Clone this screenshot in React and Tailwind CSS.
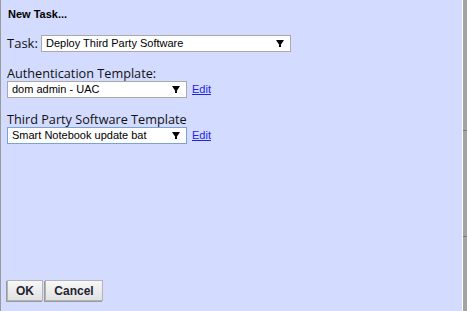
import React from 'react';

const Arrow = () => (
  <svg width="8" height="7" viewBox="0 0 8 7" className="shrink-0">
    <polygon points="0,0 8,0 4,6" fill="#000" />
    <rect x="3" y="5" width="2" height="2" fill="#000" />
  </svg>
);

const FakeSelect = ({ value, width, focused }) => (
  <div
    className={`flex h-[17px] items-center justify-between border bg-white pl-[4px] pr-[6px] font-['Liberation_Sans',Arial,sans-serif] text-[11px] text-black ${width} ${
      focused ? 'border-[#7ba1d6]' : 'border-[#a9a9a9]'
    }`}
  >
    <span className="leading-none">{value}</span>
    <Arrow />
  </div>
);

const EditLink = () => (
  <a href="#" className="ml-[5px] font-['Liberation_Sans',Arial,sans-serif] text-[11px] leading-none text-[#2222ee] underline">
    Edit
  </a>
);

const App = () => {
  return (
    <div className="flex h-[311px] w-[467px] overflow-hidden bg-[#d3dcfe]">
      <div className="w-px bg-[#9a9a9a]" />
      <div className="flex flex-1 flex-col pl-[6px] pt-[7px] pb-[10px] font-['Open_Sans',sans-serif] text-[12.7px] text-[#111]">
        <div className="pl-[1px] font-['Liberation_Sans',Arial,sans-serif] text-[11px] font-bold leading-[14px] text-black">
          New Task...
        </div>

        <div className="mt-[14px] flex items-center">
          <span className="w-[34px] text-[13px] leading-[17px]">Task:</span>
          <FakeSelect value="Deploy Third Party Software" width="w-[250px]" />
        </div>

        <div className="mt-[13px] leading-[16px]">Authentication Template:</div>
        <div className="flex items-center">
          <FakeSelect value="dom admin - UAC" width="w-[180px]" />
          <EditLink />
        </div>

        <div className="mt-[13px] leading-[16px]">Third Party Software Template</div>
        <div className="flex items-center">
          <FakeSelect value="Smart Notebook update bat" width="w-[180px]" focused />
          <EditLink />
        </div>

        <div className="mt-auto flex gap-[2px]">
          <button className="h-[21px] w-[36px] border border-[#b4b4b4] bg-gradient-to-b from-[#f7f7f7] to-[#e2e2e2] font-['Liberation_Sans',Arial,sans-serif] text-[12px] font-bold text-[#1e2433] shadow-[-1px_1px_0_#9a9a9a]">
            OK
          </button>
          <button className="h-[21px] w-[58px] border border-[#b4b4b4] bg-gradient-to-b from-[#f7f7f7] to-[#e2e2e2] font-['Liberation_Sans',Arial,sans-serif] text-[12px] font-bold text-[#1e2433] shadow-[-1px_1px_0_#9a9a9a]">
            Cancel
          </button>
        </div>
      </div>
      <div className="w-px bg-white" />
      <div className="flex w-[4px] flex-col bg-[#a3a3a3]">
        <div className="h-[130px]" />
        <div className="h-px bg-[#7a7a7a]" />
        <div className="h-[105px]" />
        <div className="h-px bg-[#7a7a7a]" />
      </div>
    </div>
  );
};

export default App;
